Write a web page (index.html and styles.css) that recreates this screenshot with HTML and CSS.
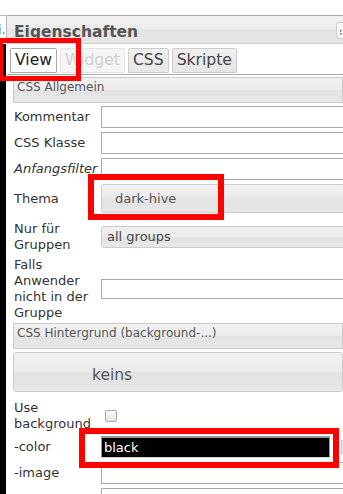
FILE: index.html
```html
<!DOCTYPE html>
<html>
<head>
<meta charset="utf-8">
<title>Eigenschaften</title>
<link rel="stylesheet" href="styles.css">
</head>
<body>

<div class="page">
  <div class="side">
    <div class="stub">i.</div>
    <div class="bar"></div>
  </div>

  <div class="panel">
    <div class="title">
      <span class="title_text">Eigenschaften</span>
      <span class="grip">
        <svg width="5" height="5" viewBox="0 0 5 5">
          <rect x="0" y="0" width="1.5" height="1.5" fill="#666"/>
          <rect x="3" y="0" width="1.5" height="1.5" fill="#666"/>
          <rect x="0" y="3" width="1.5" height="1.5" fill="#666"/>
          <rect x="3" y="3" width="1.5" height="1.5" fill="#666"/>
        </svg>
      </span>
    </div>

    <div class="tabs">
      <span class="tab tab_active">View</span>
      <span class="tab tab_disabled">Widget</span>
      <span class="tab">CSS</span>
      <span class="tab">Skripte</span>
    </div>

    <div class="content">
      <div class="group">CSS Allgemein</div>
      <table class="props">
        <tr>
          <td class="label">Kommentar</td>
          <td><input class="text" type="text"></td>
        </tr>
        <tr>
          <td class="label">CSS Klasse</td>
          <td><input class="text" type="text"></td>
        </tr>
        <tr>
          <td class="label"><i>Anfangsfilter</i></td>
          <td><input class="text" type="text"></td>
        </tr>
        <tr class="row_theme">
          <td class="label">Thema</td>
          <td><div class="select">dark-hive</div></td>
        </tr>
        <tr>
          <td class="label">Nur für Gruppen</td>
          <td><div class="select select_small">all groups</div></td>
        </tr>
        <tr>
          <td class="label">Falls Anwender nicht in der Gruppe</td>
          <td><input class="text text_short" type="text"></td>
        </tr>
      </table>

      <div class="group">CSS Hintergrund (background-...)</div>
      <div class="keins">keins</div>

      <table class="props props_bg">
        <tr>
          <td class="label">Use background</td>
          <td><span class="check"></span></td>
        </tr>
        <tr>
          <td class="label">-color</td>
          <td>
            <div class="field">
              <input class="color_input" type="text" value="black">
              <span class="pick"></span>
            </div>
          </td>
        </tr>
        <tr>
          <td class="label">-image</td>
          <td><input class="text" type="text"></td>
        </tr>
        <tr>
          <td class="label">&nbsp;</td>
          <td><input class="text" type="text"></td>
        </tr>
      </table>
    </div>
  </div>
</div>

<div class="mark mark_tab"></div>
<div class="mark mark_theme"></div>
<div class="mark mark_color"></div>

</body>
</html>
```

FILE: styles.css
```css
body {
    margin: 0;
    width: 343px;
    height: 494px;
    overflow: hidden;
    position: relative;
    background-color: #fff;
    font-family: "DejaVu Sans", Verdana, sans-serif;
    font-size: 13px;
    color: #333;
}

.page {
    display: flex;
    padding-top: 15px;
    height: 479px;
}

/* left neighbour, cut off */
.side {
    flex: none;
    width: 7px;
    display: flex;
    flex-direction: column;
}
.stub {
    height: 28px;
    border-top: 1px solid #bbb;
    border-right: 1px solid #bbb;
    overflow: hidden;
    white-space: nowrap;
    line-height: 28px;
    text-indent: -2px;
    color: #5a6a8a;
}
.bar {
    flex: 1;
    margin-right: 1px;
    background-color: #000;
}

.panel {
    flex: none;
    width: 350px;
}

.title {
    display: flex;
    align-items: flex-start;
    height: 27px;
    border-top: 1px solid #aaa;
    border-bottom: 1px solid #ccc;
    background: linear-gradient(#f1f1f1 0%, #ececec 48%, #e3e3e3 52%, #e7e7e7 100%);
}
.title_text {
    flex: 1;
    padding: 5px 0 0 7px;
    line-height: 22px;
    font-size: 15.5px;
    font-weight: bold;
    color: #555;
}
.grip {
    margin: 6px 5px 0 0;
    width: 11px;
    height: 8px;
    padding: 7px 0 0 3px;
    border: 1px solid #ccc;
    border-radius: 3px;
    background-color: #f6f6f6;
    line-height: 0;
}

.tabs {
    display: flex;
    align-items: flex-start;
    height: 26px;
    padding: 4px 0 0 3px;
    border-bottom: 1px solid #aaa;
}
.tab {
    height: 23px;
    line-height: 23px;
    padding: 0 4px;
    margin-right: 3px;
    border: 1px solid #ccc;
    border-radius: 2px 2px 0 0;
    font-size: 15.6px;
    color: #444;
    background: linear-gradient(#f0f0f0, #e6e6e6);
}
.tab_active {
    border-color: #aaa;
    background: #fff;
    color: #222;
}
.tab_disabled {
    border-color: #e4e4e4;
    background: #f5f5f5;
    color: #cfcfcf;
}

.content {
    padding: 2px 0 0 6px;
}

.group {
    box-sizing: border-box;
    width: 330px;
    height: 26px;
    padding: 2px 3px 0;
    border: 1px solid #ccc;
    font-size: 12px;
    line-height: 15px;
    color: #555;
    white-space: nowrap;
    background: linear-gradient(#f1f1f1 0%, #ececec 48%, #e3e3e3 52%, #e7e7e7 100%);
}

.props {
    border-collapse: collapse;
    border-spacing: 0;
    margin-top: 1px;
}
.props td {
    padding: 2px 0;
    vertical-align: middle;
}
.props td.label {
    width: 87px;
    padding-left: 1px;
    line-height: 16px;
}
.row_theme td {
    padding-bottom: 6px;
}
.props_bg {
    margin-top: 6px;
}

.text {
    display: block;
    box-sizing: border-box;
    width: 250px;
    height: 22px;
    margin: 0;
    padding: 0 3px;
    border: 1px solid #aaa;
    font: inherit;
    background-color: #fff;
}
.text_short {
    height: 20px;
}

.select {
    box-sizing: border-box;
    width: 250px;
    height: 29px;
    padding: 1px 0 0 13px;
    border: 1px solid #ccc;
    border-radius: 3px;
    line-height: 26px;
    color: #555;
    background: linear-gradient(#f1f1f1 0%, #ececec 48%, #e3e3e3 52%, #e7e7e7 100%);
}
.select_small {
    height: 22px;
    padding: 0 0 0 5px;
    line-height: 20px;
    color: #444;
}

.keins {
    box-sizing: border-box;
    width: 330px;
    height: 40px;
    margin-top: 3px;
    padding: 6px 0 0 78px;
    border: 1px solid #ccc;
    border-radius: 3px;
    line-height: 32px;
    font-size: 15.5px;
    color: #555;
    background: linear-gradient(#f1f1f1 0%, #ececec 48%, #e3e3e3 52%, #e7e7e7 100%);
}

.check {
    display: block;
    width: 10px;
    height: 10px;
    margin-left: 4px;
    border: 1px solid #aaa;
    border-radius: 2px;
    background: linear-gradient(#fafafa, #e2e2e2);
}

.field {
    display: flex;
    align-items: center;
}
.color_input {
    box-sizing: border-box;
    width: 229px;
    height: 22px;
    margin: 0;
    padding: 0 2px;
    border: 1px solid #999;
    border-top-width: 2px;
    border-bottom-color: #ddd;
    font: inherit;
    color: #fff;
    background-color: #000;
}
.pick {
    width: 8px;
    height: 12px;
    margin-left: 11px;
    border: 1px solid #ccc;
    background: repeating-linear-gradient(#777 0 1px, #eee 1px 3px);
    background-size: 1px 100%;
    background-repeat: no-repeat;
    background-position: 2px 0;
    background-color: #eee;
}

/* red annotation frames laid over the screenshot */
.mark {
    position: absolute;
    box-sizing: border-box;
    border: 6px solid #ff0000;
}
.mark_tab {
    left: -2px;
    top: 38px;
    width: 83px;
    height: 43px;
    border-width: 5px;
}
.mark_theme {
    left: 88px;
    top: 174px;
    width: 136px;
    height: 46px;
}
.mark_color {
    left: 79px;
    top: 428px;
    width: 260px;
    height: 40px;
}
```
